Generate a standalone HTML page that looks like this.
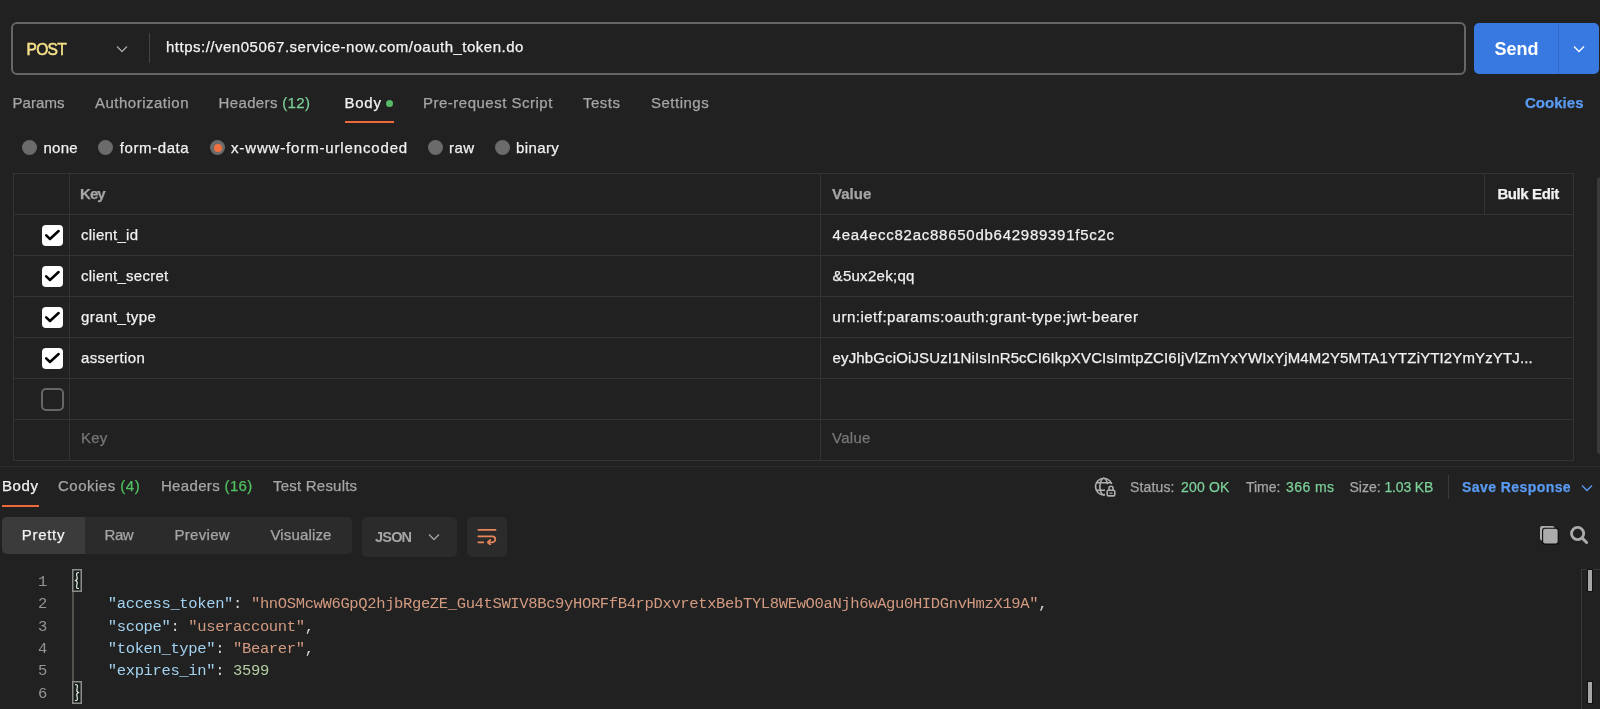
<!DOCTYPE html>
<html><head><meta charset="utf-8">
<style>
*{box-sizing:border-box;margin:0;padding:0}
html,body{width:1600px;height:709px;overflow:hidden;background:#212121;font-family:"Liberation Sans",sans-serif;color:#f0f0f0}
.a{position:absolute;white-space:nowrap}
.t15{font-size:15px;letter-spacing:0.5px;-webkit-text-stroke:0.25px currentColor}
.t14{font-size:14px;letter-spacing:0.45px;-webkit-text-stroke:0.25px currentColor}
.gray{color:#a6a6a6}
.green{color:#7ccf98}
.green2{color:#50c060}
.blue{color:#5a9bf3}
/* url bar */
#url{left:11px;top:22px;width:1455px;height:53px;border:2px solid #666;border-radius:6px}
#send{left:1474px;top:23px;width:125px;height:51px;background:#3779e1;border-radius:5px}
/* table */
.hl{position:absolute;height:1px;background:#333}
.vl{position:absolute;width:1px;background:#333}
.cb{position:absolute;width:21px;height:21px;border-radius:4px;background:#fff}
.cb svg{position:absolute;left:3px;top:4px}
.radio{position:absolute;width:15px;height:15px;border-radius:50%;background:#6b6b6b}
.mono{font-family:"Liberation Mono",monospace;font-size:15.5px;letter-spacing:-0.356px}
.k{color:#a3d2f0}
.s{color:#d29a80}
.n{color:#b3cea2}
.p{color:#d4d4d4}
.ln{color:#959595}
#wrap{position:absolute;left:0;top:0;width:1600px;height:709px;will-change:transform}
</style></head><body><div id="wrap">

<!-- URL bar -->
<div class="a" id="url"></div>
<div class="a" style="left:26.5px;top:40.6px;font-size:15.6px;font-weight:normal;color:#f5e08a;letter-spacing:-0.75px;-webkit-text-stroke:0.5px currentColor">POST</div>
<svg class="a" style="left:116px;top:45px" width="12" height="8" viewBox="0 0 12 8"><path d="M1 1.5 L6 6.5 L11 1.5" fill="none" stroke="#a6a6a6" stroke-width="1.3"/></svg>
<div class="a" style="left:149px;top:33px;width:1px;height:30px;background:#444"></div>
<div class="a t15" id="url_t" style="left:166px;top:38px;color:#f2f2f2">https://ven05067.service-now.com/oauth_token.do</div>

<div class="a" id="send"></div>
<div class="a" id="send_t" style="left:1494.5px;top:38.8px;font-size:18px;font-weight:bold;color:#fff">Send</div>
<div class="a" style="left:1558px;top:23px;width:1px;height:51px;background:#336bcc"></div>
<svg class="a" style="left:1573px;top:45px" width="12" height="8" viewBox="0 0 12 8"><path d="M1 1.5 L6 6.5 L11 1.5" fill="none" stroke="#fff" stroke-width="1.3"/></svg>

<!-- request tabs -->
<div class="a t15 gray" id="tp1" style="left:12.4px;top:94px;letter-spacing:0.1px">Params</div>
<div class="a t15 gray" id="tp2" style="left:95px;top:94px">Authorization</div>
<div class="a t15 gray" id="tp3" style="left:218.6px;top:94px;letter-spacing:0.35px">Headers <span class="green">(12)</span></div>
<div class="a t15" id="tp4" style="left:344.5px;top:94px;color:#f2f2f2;letter-spacing:0.73px">Body</div>
<div class="a" style="left:386px;top:99.5px;width:7px;height:7px;border-radius:50%;background:#55bb66"></div>
<div class="a" style="left:345px;top:121px;width:49px;height:2px;background:#f0693a"></div>
<div class="a t15 gray" id="tp5" style="left:423px;top:94px">Pre-request Script</div>
<div class="a t15 gray" id="tp6" style="left:583px;top:94px">Tests</div>
<div class="a t15 gray" id="tp7" style="left:651px;top:94px">Settings</div>
<div class="a t15 blue" id="tp8" style="left:1525px;top:94px;font-weight:bold;letter-spacing:0.03px">Cookies</div>

<!-- body type radios -->
<div class="radio" style="left:22px;top:140px"></div>
<div class="a t15" id="r1" style="left:43.5px;top:138.5px;letter-spacing:0.28px">none</div>
<div class="radio" style="left:98px;top:140px"></div>
<div class="a t15" id="r2" style="left:119.8px;top:138.5px;letter-spacing:0.59px">form-data</div>
<div class="radio" style="left:210px;top:140px"></div>
<div class="a" style="left:214px;top:144px;width:8px;height:8px;border-radius:50%;background:#f0703f"></div>
<div class="a t15" id="r3" style="left:231px;top:138.5px;letter-spacing:0.85px">x-www-form-urlencoded</div>
<div class="radio" style="left:428px;top:140px"></div>
<div class="a t15" id="r4" style="left:449px;top:138.5px">raw</div>
<div class="radio" style="left:495px;top:140px"></div>
<div class="a t15" id="r5" style="left:516px;top:138.5px;letter-spacing:0.38px">binary</div>

<!-- table -->
<div id="tbl">
<div class="a" style="left:12.5px;top:173.0px;width:1561px;height:288.0px;border:1px solid #333"></div>
<div class="hl" style="left:13px;top:214.0px;width:1560px"></div>
<div class="hl" style="left:13px;top:255.0px;width:1560px"></div>
<div class="hl" style="left:13px;top:296.0px;width:1560px"></div>
<div class="hl" style="left:13px;top:337.0px;width:1560px"></div>
<div class="hl" style="left:13px;top:378.0px;width:1560px"></div>
<div class="hl" style="left:13px;top:419.0px;width:1560px"></div>
<div class="vl" style="left:68.5px;top:173.5px;height:287.0px"></div>
<div class="vl" style="left:820px;top:173.5px;height:287.0px"></div>
<div class="vl" style="left:1484px;top:173.5px;height:41px"></div>
<div class="a t15" id="h1" style="left:80px;top:185px;font-weight:bold;color:#a6a6a6;letter-spacing:-0.95px">Key</div>
<div class="a t15" id="h2" style="left:832px;top:185px;font-weight:bold;color:#a6a6a6;letter-spacing:0.05px">Value</div>
<div class="a t15" id="h3" style="left:1497.4px;top:185px;font-weight:bold;color:#f2f2f2;letter-spacing:-0.4px">Bulk Edit</div>
<div class="cb" style="left:42px;top:224.5px"><svg width="16" height="14" viewBox="0 0 16 14"><path d="M1.2 6.3 L5 10 L13.6 2" fill="none" stroke="#000" stroke-width="2.5" stroke-linecap="round" stroke-linejoin="round"/></svg></div>
<div class="a t15" id="k1" style="left:81px;top:226.0px;letter-spacing:0.25px">client_id</div>
<div class="a t15" id="v1" style="left:832.6px;top:226.0px;letter-spacing:0.74px">4ea4ecc82ac88650db642989391f5c2c</div>
<div class="cb" style="left:42px;top:265.5px"><svg width="16" height="14" viewBox="0 0 16 14"><path d="M1.2 6.3 L5 10 L13.6 2" fill="none" stroke="#000" stroke-width="2.5" stroke-linecap="round" stroke-linejoin="round"/></svg></div>
<div class="a t15" id="k2" style="left:81px;top:267.0px;letter-spacing:0.25px">client_secret</div>
<div class="a t15" id="v2" style="left:832.6px;top:267.0px;letter-spacing:0.28px">&amp;5ux2ek;qq</div>
<div class="cb" style="left:42px;top:306.5px"><svg width="16" height="14" viewBox="0 0 16 14"><path d="M1.2 6.3 L5 10 L13.6 2" fill="none" stroke="#000" stroke-width="2.5" stroke-linecap="round" stroke-linejoin="round"/></svg></div>
<div class="a t15" id="k3" style="left:81px;top:308.0px;letter-spacing:0.44px">grant_type</div>
<div class="a t15" id="v3" style="left:832.6px;top:308.0px">urn:ietf:params:oauth:grant-type:jwt-bearer</div>
<div class="cb" style="left:42px;top:347.5px"><svg width="16" height="14" viewBox="0 0 16 14"><path d="M1.2 6.3 L5 10 L13.6 2" fill="none" stroke="#000" stroke-width="2.5" stroke-linecap="round" stroke-linejoin="round"/></svg></div>
<div class="a t15" id="k4" style="left:81px;top:349.0px;letter-spacing:0.36px">assertion</div>
<div class="a t15" id="v4" style="left:832.6px;top:349.0px;letter-spacing:0.13px">eyJhbGciOiJSUzI1NiIsInR5cCI6IkpXVCIsImtpZCI6IjVlZmYxYWIxYjM4M2Y5MTA1YTZiYTI2YmYzYTJ...</div>
<div class="a" style="left:41px;top:388px;width:23px;height:23px;border:2px solid #666;border-radius:5px"></div>
<div class="a t15" id="pk" style="left:81px;top:429px;color:#777;letter-spacing:0.2px">Key</div>
<div class="a t15" id="pv" style="left:832px;top:429px;color:#777;letter-spacing:0.3px">Value</div>
<div class="a" style="left:1597px;top:177px;width:6px;height:277px;border-radius:3px;background:#3a3a3a"></div>
</div>

<!-- response -->
<div class="hl" style="left:0;top:466px;width:1600px;background:#2e2e2e"></div>

<div class="a t15" id="rt1" style="left:1.9px;top:477px;color:#f2f2f2;letter-spacing:0.63px">Body</div>
<div class="a" style="left:2px;top:505px;width:37px;height:2px;background:#f0693a"></div>
<div class="a t15 gray" id="rt2" style="left:58px;top:477px">Cookies <span class="green2">(4)</span></div>
<div class="a t15 gray" id="rt3" style="left:160.9px;top:477px;letter-spacing:0.35px">Headers <span class="green2">(16)</span></div>
<div class="a t15 gray" id="rt4" style="left:273px;top:477px;letter-spacing:0.22px">Test Results</div>
<svg class="a" style="left:1090px;top:472px" width="32" height="28" viewBox="0 0 32 28"><defs><mask id="gm"><rect width="32" height="28" fill="#fff"/><rect x="15" y="12" width="14" height="14" rx="3" fill="#000"/></mask></defs><g fill="none" stroke="#b0b0b0" stroke-width="1.6"><g mask="url(#gm)"><circle cx="13.8" cy="14.6" r="8.3"/><ellipse cx="13.8" cy="14.6" rx="3.9" ry="8.3"/><path d="M6 10.8 H21.5 M6 18.3 H21.5"/></g><rect x="17.2" y="18.3" width="7.6" height="5.6" rx="1.4"/><path d="M19 18.3 V16.2 A2 2 0 0 1 23 16.2 V18.3"/><path d="M19.5 21.1 H22.5" stroke-width="1.2"/></g></svg>
<div class="a t14 gray" id="st1" style="left:1130px;top:478.7px;letter-spacing:0.15px">Status:</div>
<div class="a t14 green" id="st2" style="left:1181px;top:478.7px;letter-spacing:0.19px">200 OK</div>
<div class="a t14 gray" id="st3" style="left:1246px;top:478.7px;letter-spacing:-0.05px">Time:</div>
<div class="a t14 green" id="st4" style="left:1286px;top:478.7px;letter-spacing:0.43px">366 ms</div>
<div class="a t14 gray" id="st5" style="left:1349.4px;top:478.7px;letter-spacing:0.05px">Size:</div>
<div class="a t14 green" id="st6" style="left:1384.4px;top:478.7px;letter-spacing:-0.15px">1.03 KB</div>
<div class="a" style="left:1448px;top:475px;width:1px;height:24px;background:#3a3a3a"></div>
<div class="a t14 blue" id="st7" style="left:1462px;top:478.7px;font-weight:bold;letter-spacing:0.43px">Save Response</div>
<svg class="a" style="left:1581px;top:484px" width="12" height="8" viewBox="0 0 12 8"><path d="M1 1.5 L6 6.5 L11 1.5" fill="none" stroke="#5a9bf3" stroke-width="1.3"/></svg>
<div class="a" style="left:2px;top:517px;width:350px;height:37px;background:#2b2b2b;border-radius:5px"></div>
<div class="a" style="left:2px;top:517px;width:83px;height:37px;background:#3b3b3b;border-radius:5px 0 0 5px"></div>
<div class="a t15" id="sg1" style="left:21.8px;top:526px;color:#f2f2f2;letter-spacing:0.7px">Pretty</div>
<div class="a t15 gray" id="sg2" style="left:104.5px;top:526px;letter-spacing:-0.4px">Raw</div>
<div class="a t15 gray" id="sg3" style="left:174.5px;top:526px;letter-spacing:0.3px">Preview</div>
<div class="a t15 gray" id="sg4" style="left:270.4px;top:526px;letter-spacing:0.16px">Visualize</div>
<div class="a" style="left:362px;top:517px;width:95px;height:40px;background:#2b2b2b;border-radius:5px"></div>
<div class="a gray" id="sg5" style="left:375px;top:529px;font-size:14.5px;font-weight:bold;letter-spacing:-0.8px">JSON</div>
<svg class="a" style="left:428px;top:533px" width="12" height="8" viewBox="0 0 12 8"><path d="M1 1.5 L6 6.5 L11 1.5" fill="none" stroke="#a6a6a6" stroke-width="1.3"/></svg>
<div class="a" style="left:467px;top:517px;width:40px;height:40px;background:#2b2b2b;border-radius:5px"></div>
<svg class="a" style="left:476px;top:527px" width="22" height="18" viewBox="0 0 22 18"><g fill="none" stroke="#e8875c" stroke-width="1.7" stroke-linecap="round" stroke-linejoin="round"><path d="M2.3 2.8 H19.6"/><path d="M2.3 9.3 H16.3 A3 3 0 0 1 16.3 15.3 H12.2"/><path d="M14.2 12.9 L11.8 15.3 L14.2 17.6"/><path d="M2.3 15.3 H7.3"/></g></svg>
<svg class="a" style="left:1534px;top:520px" width="60" height="30" viewBox="0 0 60 30"><rect x="6" y="6" width="14.5" height="14.5" rx="2" fill="#ababab"/><rect x="8.6" y="8.3" width="15.6" height="15.8" rx="2.3" fill="#ababab" stroke="#0c0c0c" stroke-width="1.1"/><circle cx="43.6" cy="13.5" r="6.1" fill="none" stroke="#ababab" stroke-width="2.8"/><path d="M48.2 18.1 L52.6 22.5" stroke="#ababab" stroke-width="3" stroke-linecap="round"/></svg>
<div class="a mono ln" style="left:38px;top:572.80px;line-height:18px">1</div>
<div class="a mono" style="left:72px;top:572.80px;line-height:18px;white-space:pre"></div>
<div class="a mono ln" style="left:38px;top:595.15px;line-height:18px">2</div>
<div class="a mono" style="left:72px;top:595.15px;line-height:18px;white-space:pre">    <span class="k">"access_token"</span><span class="p">: </span><span class="s">"hnOSMcwW6GpQ2hjbRgeZE_Gu4tSWIV8Bc9yHORFfB4rpDxvretxBebTYL8WEwO0aNjh6wAgu0HIDGnvHmzX19A"</span><span class="p">,</span></div>
<div class="a mono ln" style="left:38px;top:617.50px;line-height:18px">3</div>
<div class="a mono" style="left:72px;top:617.50px;line-height:18px;white-space:pre">    <span class="k">"scope"</span><span class="p">: </span><span class="s">"useraccount"</span><span class="p">,</span></div>
<div class="a mono ln" style="left:38px;top:639.85px;line-height:18px">4</div>
<div class="a mono" style="left:72px;top:639.85px;line-height:18px;white-space:pre">    <span class="k">"token_type"</span><span class="p">: </span><span class="s">"Bearer"</span><span class="p">,</span></div>
<div class="a mono ln" style="left:38px;top:662.20px;line-height:18px">5</div>
<div class="a mono" style="left:72px;top:662.20px;line-height:18px;white-space:pre">    <span class="k">"expires_in"</span><span class="p">: </span><span class="n">3599</span></div>
<div class="a mono ln" style="left:38px;top:684.55px;line-height:18px">6</div>
<div class="a mono" style="left:72px;top:684.55px;line-height:18px;white-space:pre"></div>
<div class="a" style="left:72px;top:591px;width:1.5px;height:90px;background:#52524e"></div>
<svg class="a" style="left:71.5px;top:569px" width="10" height="23" viewBox="0 0 10 23"><rect x="0.75" y="0.75" width="8.5" height="21.5" fill="#16201a" stroke="#8c8c8c" stroke-width="1.5"/><path d="M7 3.5 C4 3.5 4.5 5 4.8 7 C5 9 6.5 10 3.6 11.5 C6.5 13 5 14.5 4.8 16 C4.5 18 4 19.5 7 19.5" fill="none" stroke="#e6e6e6" stroke-width="1.2"/></svg>
<svg class="a" style="left:71.5px;top:681px" width="10" height="23" viewBox="0 0 10 23"><rect x="0.75" y="0.75" width="8.5" height="21.5" fill="#16201a" stroke="#8c8c8c" stroke-width="1.5"/><path d="M3 3.5 C6 3.5 5.5 5 5.2 7 C5 9 3.5 10 6.4 11.5 C3.5 13 5 14.5 5.2 16 C5.5 18 6 19.5 3 19.5" fill="none" stroke="#e6e6e6" stroke-width="1.2"/></svg>
<div class="a" style="left:1581px;top:569px;width:1px;height:140px;background:#383838"></div>
<div class="a" style="left:1581px;top:568.5px;width:19px;height:1px;background:#383838"></div>
<div class="a" style="left:1587px;top:569px;width:6px;height:23px;background:#a6a6a6;border:1px solid #111"></div>
<div class="a" style="left:1587px;top:681px;width:6px;height:23px;background:#a6a6a6;border:1px solid #111"></div>
</div></body></html>
